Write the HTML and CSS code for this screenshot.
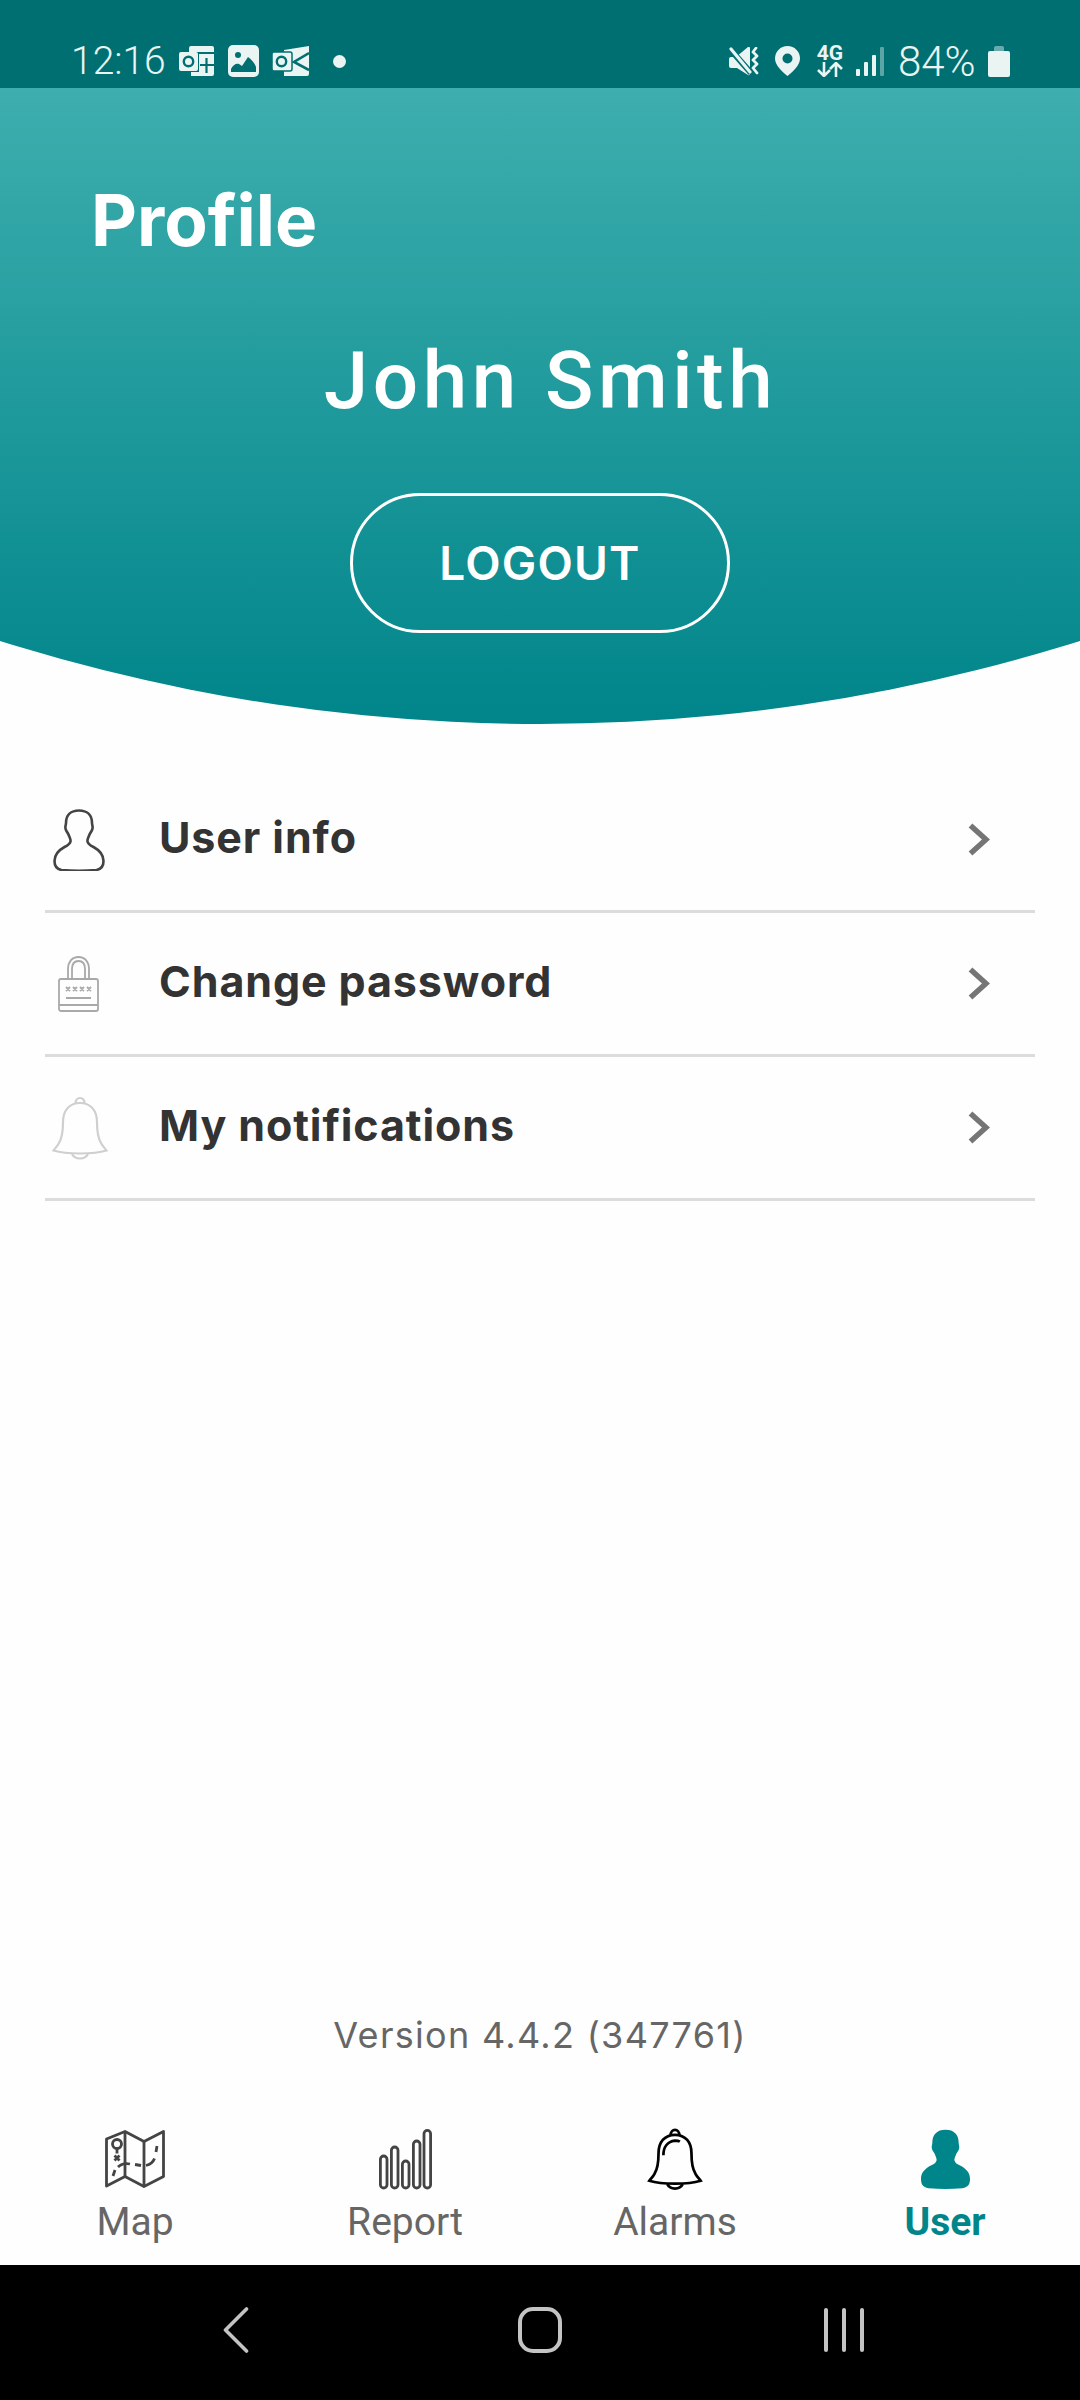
FILE: index.html
```html
<!DOCTYPE html>
<html lang="en">
<head>
<meta charset="UTF-8" />
<title>Profile</title>
<link rel="stylesheet" href="styles.css">
</head>
<body>
<div class="page">

  <!-- Android status bar -->
  <div class="status-bar">
    <div class="status-left">
      <span class="clock">12:16</span>
      <svg class="ic-outlook" viewBox="0 0 35 30" fill="#e9f4f3">
        <path d="M10 2a2 2 0 0 1 2-2h21a2 2 0 0 1 2 2v4H10z"/>
        <path d="M20 8h15v20a2 2 0 0 1-2 2H12v-4h8z"/>
        <rect x="0" y="6" width="19" height="19" rx="2"/>
        <circle cx="9.500" cy="15.500" r="4.700" fill="none" stroke="#006f71" stroke-width="2.400"/>
        <path d="M27.500 12v15M21 19h14" stroke="#006f71" stroke-width="2.200"/>
      </svg>
      <svg class="ic-image" viewBox="0 0 31 32">
        <rect width="31" height="32" rx="5" fill="#e9f4f3"/>
        <circle cx="10" cy="10" r="3" fill="#006f71"/>
        <path d="M3 27v-3c2-4 5-6 8-5l3 2 6-9c3 2 6 5 8 10v5z" fill="#006f71"/>
      </svg>
      <svg class="ic-mail" viewBox="0 0 37 30" fill="#e9f4f3">
        <path d="M12 4l25-4v28a2 2 0 0 1-2 2H12z"/>
        <path d="M37 7L22 16l15 8" fill="none" stroke="#006f71" stroke-width="2.600"/>
        <rect x="0" y="6" width="20" height="19" rx="2" stroke="#006f71" stroke-width="1.500"/>
        <circle cx="9.500" cy="15.500" r="4.700" fill="none" stroke="#006f71" stroke-width="2.400"/>
      </svg>
      <span class="dot"></span>
    </div>
    <div class="status-right">
      <svg class="ic-mute" viewBox="0 0 30 29" fill="#e9f4f3">
        <path d="M0 12a2 2 0 0 1 2-2h5L19 0c1-.5 2 0 2 1v26c0 1-1 1.500-2 1L8 21H2a2 2 0 0 1-2-2z"/>
        <path d="M1 2l21 24" stroke="#006f71" stroke-width="6"/>
        <path d="M2 2l19 23" stroke="#e9f4f3" stroke-width="3.200" stroke-linecap="round"/>
        <path d="M27 1l-3 4 4 4-4 4 4 4-4 4 4 5" fill="none" stroke="#e9f4f3" stroke-width="2.800" stroke-linecap="round" stroke-linejoin="round"/>
      </svg>
      <svg class="ic-pin" viewBox="0 0 25 30">
        <path d="M12.500 0C5.500 0 0 5.500 0 12.500 0 20 8 26 12.500 30 17 26 25 20 25 12.500 25 5.500 19.500 0 12.500 0z" fill="#e9f4f3"/>
        <circle cx="12.500" cy="12.500" r="5" fill="#006f71"/>
      </svg>
      <div class="net">
        <span class="net-label">4G</span>
        <svg class="ic-arrows" viewBox="0 0 26 15" fill="none" stroke="#e9f4f3" stroke-width="2.600">
          <path d="M7 0v13M1 8l6 6 6-6"/>
          <path d="M19 15V2M13 7l6-6 6 6"/>
        </svg>
      </div>
      <svg class="ic-signal" viewBox="0 0 28 29" fill="#e9f4f3">
        <rect x="0" y="22" width="4" height="7" rx="1"/>
        <rect x="8" y="15" width="4" height="14" rx="1"/>
        <rect x="16" y="8" width="4" height="21" rx="1"/>
        <rect x="24" y="0" width="4" height="29" rx="1" opacity="0.4"/>
      </svg>
      <span class="battery-text">84%</span>
      <svg class="ic-battery" viewBox="0 0 22 31">
        <path d="M6 5V2a2 2 0 0 1 2-2h6a2 2 0 0 1 2 2v3z" fill="#e9f4f3" opacity="0.45"/>
        <path d="M2 5h18a2 2 0 0 1 2 2v22a2 2 0 0 1-2 2H2a2 2 0 0 1-2-2V7a2 2 0 0 1 2-2z" fill="#e9f4f3"/>
      </svg>
    </div>
  </div>

  <!-- Teal curved header -->
  <header class="profile-header">
    <h1 class="title">Profile</h1>
    <div class="name">John Smith</div>
    <button class="logout">LOGOUT</button>
  </header>

  <!-- Settings list -->
  <div class="menu">
    <div class="menu-row">
      <span class="menu-icon">
        <svg class="ic-user" viewBox="0 0 52 62" fill="none" stroke="#444" stroke-width="2.600">
          <path d="M26 1.500C18 1.500 13 6 13 14c0 2-1 3-.5 5.500.5 3 2 3.500 3 6 1 3 2.500 5 2 7-.5 2.500-3 4-6 5.500C6 41 1.500 45 1.500 52c0 5 2 8 7 9 11 1 24 1 35 0 5-1 7-4 7-9 0-7-4.500-11-10-14-3-1.500-5.500-3-6-5.500-.5-2 1-4 2-7 1-2.500 2.500-3 3-6 .5-2.500-.5-3.500-.5-5.500C39 6 34 1.500 26 1.500z"/>
        </svg>
      </span>
      <span class="menu-label">User info</span>
      <svg class="chevron" viewBox="0 0 22 33" fill="none" stroke="#757575" stroke-width="5.500"><path d="M2.500 2.500L18 16.500 2.500 30.500"/></svg>
    </div>
    <div class="menu-row">
      <span class="menu-icon">
        <svg class="ic-lock" viewBox="0 0 41 56" fill="none" stroke="#a9a9a9" stroke-width="1.800">
          <path d="M10 23V13C10 6 14 1 20.500 1S31 6 31 13v10"/>
          <path d="M14 23V13c0-5 2.500-8 6.500-8S27 8 27 13v10"/>
          <rect x="1" y="23" width="39" height="32" rx="2"/>
          <path d="M1 49h39M8 42h25"/>
          <path d="M8 31l4 4M12 31l-4 4M15 31l4 4M19 31l-4 4M22 31l4 4M26 31l-4 4M29 31l4 4M33 31l-4 4"/>
        </svg>
      </span>
      <span class="menu-label">Change password</span>
      <svg class="chevron" viewBox="0 0 22 33" fill="none" stroke="#757575" stroke-width="5.500"><path d="M2.500 2.500L18 16.500 2.500 30.500"/></svg>
    </div>
    <div class="menu-row">
      <span class="menu-icon">
        <svg class="ic-bell" viewBox="0 0 56 64" fill="none" stroke="#cfcfcf" stroke-width="2.200">
          <path d="M28 7C17 7 11 15 11 26c0 10-1 16-4 21-1.500 3-4 5.500-5.500 7.500 8 2.500 17 3 26.500 3s18.500-.5 26.500-3C53 52.500 50.500 50 49 47c-3-5-4-11-4-21C45 15 39 7 28 7z"/>
          <path d="M23.500 7.500c0-3.500 2-5.500 4.500-5.500s4.500 2 4.500 5.500"/>
          <path d="M20 58c1.500 3 4 4.500 8 4.500s6.500-1.500 8-4.500"/>
        </svg>
      </span>
      <span class="menu-label">My notifications</span>
      <svg class="chevron" viewBox="0 0 22 33" fill="none" stroke="#757575" stroke-width="5.500"><path d="M2.500 2.500L18 16.500 2.500 30.500"/></svg>
    </div>
  </div>

  <div class="version">Version 4.4.2 (347761)</div>

  <!-- Bottom tabs -->
  <nav class="tabs">
    <div class="tab">
      <svg class="tab-icon" width="60" height="58" viewBox="0 0 60 58" fill="none" stroke="#444" stroke-width="2.800" stroke-linejoin="round">
        <path d="M1.500 9L20 1.500 39 11.500l19.500-10v45L39 56.500 20 46.500 1.500 56z"/>
        <path d="M20 1.500v45M39 11.500v45"/>
        <circle cx="12" cy="14" r="4.500"/>
        <path d="M12 18.500v5M9.500 25.500l5 5M14.500 25.500l-5 5"/>
        <path d="M8 46l2-6M13 37c3-3 7-4 12-3M30 34.500l6 1M41 35.500c4-1 7-3 8.500-7M51 22l1-6"/>
      </svg>
      <span class="tab-label">Map</span>
    </div>
    <div class="tab">
      <svg class="tab-icon" width="53" height="60" viewBox="0 0 53 60" fill="none" stroke="#444" stroke-width="2.800">
        <rect x="1.400" y="27" width="6.600" height="32" rx="3.300"/>
        <rect x="12.400" y="18" width="6.600" height="41" rx="3.300"/>
        <rect x="23.400" y="32" width="6.600" height="27" rx="3.300"/>
        <rect x="34.400" y="12" width="6.600" height="47" rx="3.300"/>
        <rect x="45" y="1.400" width="6.600" height="57.600" rx="3.300"/>
      </svg>
      <span class="tab-label">Report</span>
    </div>
    <div class="tab">
      <svg class="tab-icon" width="56" height="62" viewBox="0 0 56 64" fill="none" stroke="#000" stroke-width="2.800">
        <path d="M28 7C17 7 11 15 11 26c0 10-1 16-4 21-1.500 3-4 5.500-5.500 7.500 8 2.500 17 3 26.500 3s18.500-.5 26.500-3C53 52.500 50.500 50 49 47c-3-5-4-11-4-21C45 15 39 7 28 7z"/>
        <path d="M23.500 7.500c0-3.500 2-5.500 4.500-5.500s4.500 2 4.500 5.500"/>
        <path d="M20 58c1.500 3 4 4.500 8 4.500s6.500-1.500 8-4.500"/>
        <path d="M16 28c0-8 4-14 12-15 2 0 3.500 0 5 1"/>
      </svg>
      <span class="tab-label">Alarms</span>
    </div>
    <div class="tab active">
      <svg class="tab-icon" width="49" height="60" viewBox="0 0 52 62" fill="#00868a">
        <path d="M26 0C17 0 12 5 12 14c0 2-1 3-.5 5.500.5 3 2 3.500 3 6 1 3 2.500 5 2 7-.5 2.500-3 4-6 5.500C5 41 0 45 0 52c0 6 2 9 8 10 12 1 24 1 36 0 6-1 8-4 8-10 0-7-5-11-10.500-14-3-1.500-5.500-3-6-5.500-.5-2 1-4 2-7 1-2.500 2.500-3 3-6 .5-2.500-.5-3.500-.5-5.500C40 5 35 0 26 0z"/>
      </svg>
      <span class="tab-label">User</span>
    </div>
  </nav>

  <!-- Android nav bar -->
  <div class="nav-bar">
    <svg class="nav-back" viewBox="0 0 26 46" fill="none" stroke="#c4c4c4" stroke-width="3.600" stroke-linecap="round" stroke-linejoin="round"><path d="M23.500 2L2.500 23l21 21"/></svg>
    <span class="nav-home"></span>
    <div class="nav-recent"><span></span><span></span><span></span></div>
  </div>

</div>
</body>
</html>
```

FILE: styles.css
```css
body {
  margin: 0;
  background: #fff;
  font-family: "Inter", "Liberation Sans", sans-serif;
}
.page {
  width: 1080px;
  height: 2400px;
  display: flex;
  flex-direction: column;
  overflow: hidden;
  background: #fefefe;
}

/* Status bar */
.status-bar {
  height: 88px;
  flex: none;
  background: #006f71;
  display: flex;
  justify-content: space-between;
  align-items: flex-start;
  padding: 45px 70px 0 71px;
  box-sizing: border-box;
  color: #e9f4f3;
  font-family: "Roboto", sans-serif;
  font-weight: 300;
}
.status-left, .status-right {
  display: flex;
  align-items: center;
  height: 32px;
}
.clock { width: 108px; font-size: 39px; }
.ic-outlook { width: 35px; height: 30px; }
.ic-image { width: 31px; height: 32px; margin-left: 14px; }
.ic-mail { width: 37px; height: 30px; margin-left: 13px; }
.dot {
  width: 13px;
  height: 13px;
  margin-left: 24px;
  border-radius: 50%;
  background: #e9f4f3;
}
.ic-mute { width: 30px; height: 29px; }
.ic-pin { width: 25px; height: 30px; margin-left: 16px; }
.net {
  width: 26px;
  margin-left: 17px;
  display: flex;
  flex-direction: column;
  align-items: center;
}
.net-label {
  font-size: 21px;
  font-weight: 700;
  line-height: 17px;
}
.ic-arrows { width: 26px; height: 15px; }
.ic-signal { width: 28px; height: 29px; margin-left: 13px; }
.battery-text { margin-left: 14px; width: 84px; font-size: 42px; }
.ic-battery { width: 22px; height: 31px; margin-left: 6px; }

/* Header */
.profile-header {
  height: 636px;
  flex: none;
  box-sizing: border-box;
  padding-top: 92px;
  background: linear-gradient(#3eaeae, #00858a);
  clip-path: circle(1798px at 540px -1162px);
  color: #fff;
  display: flex;
  flex-direction: column;
  align-items: center;
}
.title {
  align-self: flex-start;
  margin: 0 0 0 91px;
  font-size: 71px;
  font-weight: 700;
  line-height: 80px;
}
.name {
  margin: 74px 0 0 21px;
  font-family: "Roboto", sans-serif;
  font-size: 80px;
  font-weight: 500;
  letter-spacing: 4.500px;
  line-height: 94px;
}
.logout {
  width: 380px;
  height: 140px;
  margin-top: 65px;
  box-sizing: border-box;
  border: 3px solid #fff;
  border-radius: 70px;
  background: transparent;
  color: #fff;
  font-family: "Inter", sans-serif;
  font-size: 46px;
  font-weight: 600;
  letter-spacing: 1.200px;
}

/* Menu list */
.menu {
  margin: 45px 45px 0;
  flex: 1;
}
.menu-row {
  height: 144px;
  box-sizing: border-box;
  border-bottom: 3px solid #dcdcdc;
  display: flex;
  align-items: center;
}
.menu-icon {
  width: 114px;
  flex: none;
  display: flex;
  padding-left: 8px;
  box-sizing: border-box;
}
.ic-user { width: 52px; height: 62px; }
.ic-lock { width: 41px; height: 56px; margin-left: 5px; }
.ic-bell { width: 56px; height: 64px; margin-left: -1px; }
.menu-label {
  flex: 1;
  padding-bottom: 5px;
  font-size: 43px;
  font-weight: 700;
  letter-spacing: 0.900px;
  color: #333;
}
.chevron {
  width: 22px;
  height: 33px;
  margin-right: 45px;
}

.version {
  text-align: center;
  font-size: 36px;
  letter-spacing: 1.300px;
  color: #666;
  line-height: 44px;
  margin-bottom: 58px;
}

/* Bottom tabs */
.tabs {
  height: 150px;
  flex: none;
  box-sizing: border-box;
  padding-top: 13px;
  display: grid;
  grid-template-columns: repeat(4, 270px);
}
.tab {
  display: flex;
  flex-direction: column;
  align-items: center;
  font-family: "Roboto", sans-serif;
  font-size: 39px;
  color: #666;
}
.tab-icon {
  height: 62px;
  flex: none;
}
.tab-label {
  margin-top: 9px;
  line-height: 46px;
}
.tab.active {
  color: #00868a;
  font-weight: 700;
}

/* Android nav bar */
.nav-bar {
  height: 135px;
  flex: none;
  box-sizing: border-box;
  padding-bottom: 5px;
  background: #000;
  display: grid;
  grid-template-columns: repeat(3, 304px);
  justify-content: center;
  align-items: center;
  justify-items: center;
}
.nav-back { width: 26px; height: 46px; }
.nav-home {
  width: 44px;
  height: 46px;
  box-sizing: border-box;
  border: 4px solid #c4c4c4;
  border-radius: 15px;
}
.nav-recent {
  display: flex;
  gap: 14px;
}
.nav-recent span {
  width: 4px;
  height: 44px;
  border-radius: 2px;
  background: #c4c4c4;
}
```
